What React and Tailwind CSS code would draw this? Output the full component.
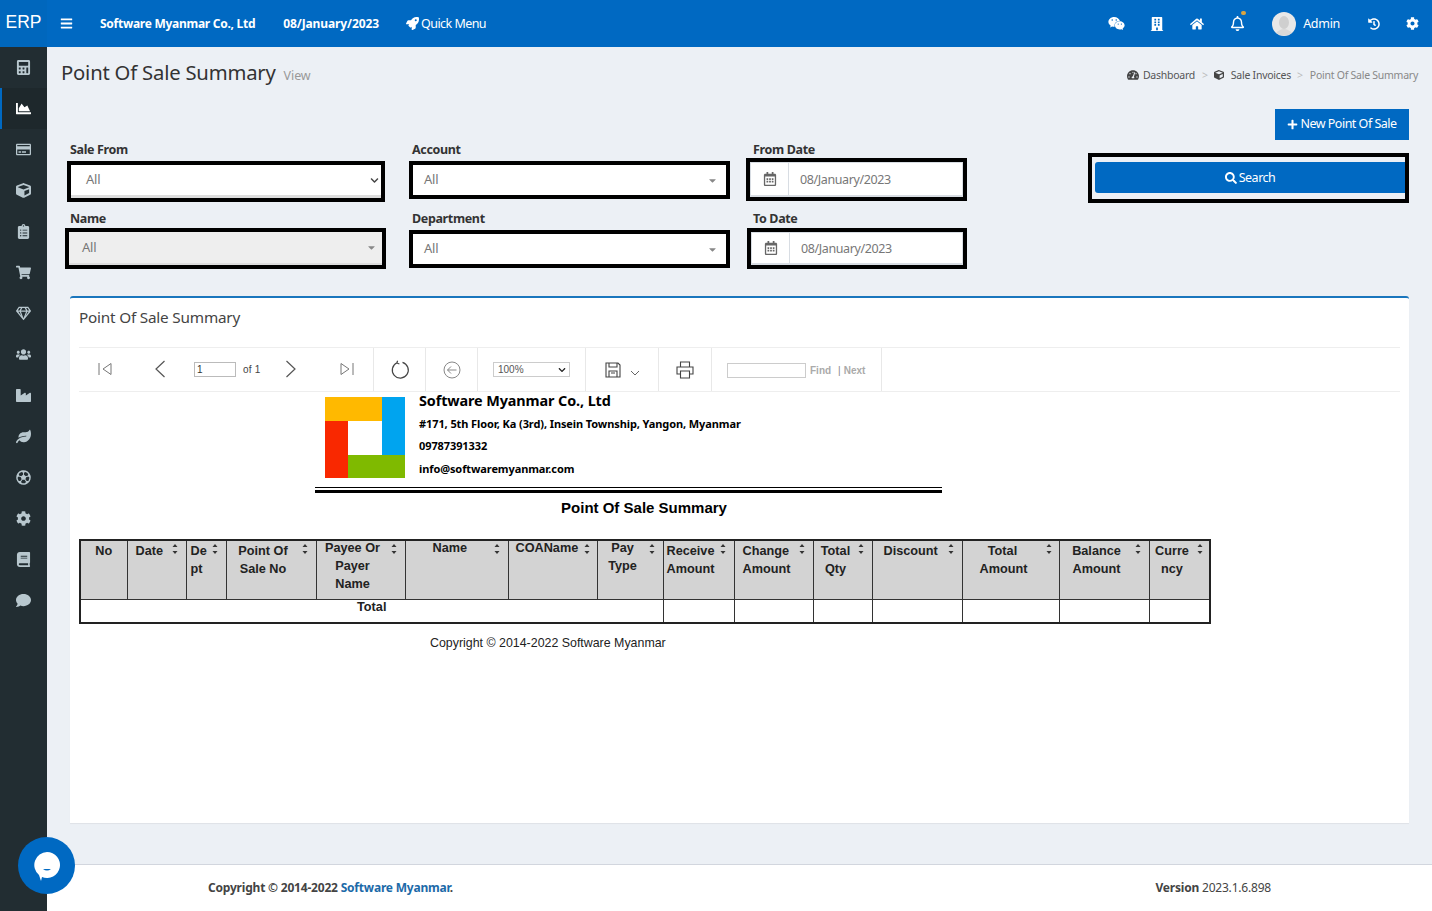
import React from 'react';
import {
  FaCalculator, FaChartArea, FaRegCreditCard, FaCube, FaClipboardList, FaShoppingCart, FaRegGem, FaUsers,
  FaIndustry, FaLeaf, FaRegFutbol, FaCog, FaBook, FaComment, FaBars, FaRocket, FaWeixin, FaBuilding, FaHome,
  FaRegBell, FaHistory, FaTachometerAlt, FaPlus, FaSearch, FaRegCalendarAlt, FaChevronDown, FaCaretDown,
} from 'react-icons/fa';

const side = [FaCalculator, FaChartArea, FaRegCreditCard, FaCube, FaClipboardList, FaShoppingCart, FaRegGem, FaUsers, FaIndustry, FaLeaf, FaRegFutbol, FaCog, FaBook, FaComment];

const columns = [
  { w: 'w-[47px]', lines: ['No'], cls: 'pt-[1px] text-center', sort: false },
  { w: 'w-[59px]', lines: ['Date'], cls: 'pt-[1px] pl-[8px]', sort: 'left-[44px] top-[2px]' },
  { w: 'w-[40px]', lines: ['De', 'pt'], cls: 'pt-[1px] pl-[4px]', sort: 'left-[25px] top-[2px]' },
  { w: 'w-[90px]', lines: ['Point Of', 'Sale No'], cls: 'pt-[1px] pl-[5px] text-center w-[68px]', sort: 'left-[75px] top-[2px]' },
  { w: 'w-[89px]', lines: ['Payee Or', 'Payer', 'Name'], cls: '-mt-[2px] text-center pl-[8px] w-[64px]', sort: 'left-[74px] top-[2px]' },
  { w: 'w-[103px]', lines: ['Name'], cls: '-mt-[2px] pl-[27px]', sort: 'left-[88px] top-[2px]' },
  { w: 'w-[89px]', lines: ['COAName'], cls: '-mt-[2px] pl-[7px]', sort: 'left-[75px] top-[2px]' },
  { w: 'w-[66px]', lines: ['Pay', 'Type'], cls: '-mt-[2px] pl-[5px] text-center w-[45px]', sort: 'left-[51px] top-[2px]' },
  { w: 'w-[71px]', lines: ['Receive', 'Amount'], cls: 'pt-[1px] pl-[3px]', sort: 'left-[56px] top-[2px]' },
  { w: 'w-[79px]', lines: ['Change', 'Amount'], cls: 'pt-[1px] pl-[8px]', sort: 'left-[64px] top-[2px]' },
  { w: 'w-[59px]', lines: ['Total', 'Qty'], cls: 'pt-[1px] pl-[6px] text-center w-[38px]', sort: 'left-[44px] top-[2px]' },
  { w: 'w-[90px]', lines: ['Discount'], cls: 'pt-[1px] pl-[11px]', sort: 'left-[75px] top-[2px]' },
  { w: 'w-[97px]', lines: ['Total', 'Amount'], cls: 'pt-[1px] pl-[17px] text-center w-[63px]', sort: 'left-[83px] top-[2px]' },
  { w: 'w-[90px]', lines: ['Balance', 'Amount'], cls: 'pt-[1px] pl-[11px] text-center w-[63px]', sort: 'left-[75px] top-[2px]' },
  { w: 'w-[61px]', lines: ['Curre', 'ncy'], cls: 'pt-[1px] pl-[5px] text-center w-[40px]', sort: 'left-[47px] top-[2px]' },
];

function Sort({ pos }) {
  return (
    <svg className={`absolute ${pos}`} width="6" height="12" viewBox="0 0 6 12">
      <path d="M3 1 L5.5 4 H0.5 Z M3 11 L5.5 8 H0.5 Z" fill="#333" />
    </svg>
  );
}

function Label({ children, cls = '' }) {
  return <div className={`h-[16px] pt-[1px] text-[12.5px] leading-[16px] font-bold text-[#333] tracking-[-0.35px] ${cls}`}>{children}</div>;
}

function SelectField({ frame, inner, icon }) {
  return (
    <div className={`border-[4px] border-black ${frame}`}>
      <div className={`h-full flex items-center justify-between ${inner}`}>
        <span className="text-[13px] text-[#777] tracking-[-0.2px]">All</span>
        {icon}
      </div>
    </div>
  );
}

function DateField({ frame }) {
  return (
    <div className={`border-[4px] border-black ${frame}`}>
      <div className="h-full flex bg-white border border-[#d8dde3] border-b-[2px]">
        <div className="w-[38px] flex items-center justify-center border-r border-[#d8dde3]">
          <FaRegCalendarAlt className="text-[14px] text-[#666]" />
        </div>
        <div className="flex items-center pl-[11px] pt-[2px] text-[12.5px] text-[#777] tracking-[-0.4px]">08/January/2023</div>
      </div>
    </div>
  );
}

const Caret = () => <FaCaretDown className="text-[11px] text-[#888]" />;

function Toolbar() {
  return (
    <div className="h-[45px] mt-[19px] border-y-[1.5px] border-[#eeeeee] flex items-stretch text-[#666]">
      <div className="w-[295px] border-r border-[#e8e8e8] flex items-center pb-[1px]">
        <svg className="ml-[18px]" width="16" height="14" viewBox="0 0 16 14" fill="none" stroke="#777" strokeWidth="1"><path d="M2 1 V13 M14 1.5 V12.5 L6 7 Z" /></svg>
        <svg className="ml-[41px]" width="12" height="18" viewBox="0 0 12 18" fill="none" stroke="#555" strokeWidth="1.2"><path d="M10.5 1 L2 9 L10.5 17" /></svg>
        <div className="ml-[28px] w-[42px] h-[15px] border border-[#bbb] bg-white text-[10px] leading-[13px] pl-[2px] font-['Liberation_Sans',sans-serif] text-[#333]">1</div>
        <span className="ml-[7px] text-[10px] font-['Liberation_Sans',sans-serif] text-[#444] tracking-[0.2px]">of 1</span>
        <svg className="ml-[25px]" width="12" height="18" viewBox="0 0 12 18" fill="none" stroke="#555" strokeWidth="1.2"><path d="M1.5 1 L10 9 L1.5 17" /></svg>
        <svg className="ml-[42px]" width="16" height="14" viewBox="0 0 16 14" fill="none" stroke="#777" strokeWidth="1"><path d="M14 1 V13 M2 1.5 V12.5 L10 7 Z" /></svg>
      </div>
      <div className="w-[52px] border-r border-[#e8e8e8] flex items-center justify-center">
        <svg width="20" height="20" viewBox="0 0 20 20" fill="none" stroke="#444" strokeWidth="1.2"><path d="M7 2.8 A8 8 0 1 0 12.5 2.4 M7.6 0.8 L6.8 3 L9.4 4" /></svg>
      </div>
      <div className="w-[52px] border-r border-[#e8e8e8] flex items-center justify-center">
        <svg width="18" height="18" viewBox="0 0 18 18" fill="none" stroke="#888" strokeWidth="1"><circle cx="9" cy="9" r="8" /><path d="M13.5 9 H4.5 M8 5.5 L4.5 9 L8 12.5" /></svg>
      </div>
      <div className="w-[108px] border-r border-[#e8e8e8] flex items-center pl-[15px]">
        <div className="w-[77px] h-[15px] border border-[#ccc] bg-white flex items-center justify-between pl-[4px] pr-[3px] text-[10px] font-['Liberation_Sans',sans-serif] text-[#555]">
          100%<FaChevronDown className="text-[8px] text-[#222]" />
        </div>
      </div>
      <div className="w-[73px] border-r border-[#e8e8e8] flex items-center pl-[19px]">
        <svg width="16" height="16" viewBox="0 0 16 16" fill="none" stroke="#444" strokeWidth="1.1"><path d="M1 1 H13 L15 3 V15 H1 Z M4 1 V5 H12 V1 M4 15 V9 H12 V15 M6 11 H10" /></svg>
        <svg className="ml-[9px] mt-[6px]" width="10" height="6" viewBox="0 0 10 6" fill="none" stroke="#666" strokeWidth="1"><path d="M1 1 L5 5 L9 1" /></svg>
      </div>
      <div className="w-[53px] border-r border-[#e8e8e8] flex items-center justify-center">
        <svg width="18" height="18" viewBox="0 0 18 18" fill="none" stroke="#444" strokeWidth="1.1"><path d="M4.5 6 V1 H13.5 V6 M4.5 13 H1 V6 H17 V13 H13.5 M4.5 10 H13.5 V17 H4.5 Z" /></svg>
      </div>
      <div className="w-[170px] border-r border-[#e8e8e8] flex items-center pl-[15px] pt-[2px] font-['Liberation_Sans',sans-serif] text-[10px] font-bold text-[#aaa]">
        <div className="w-[79px] h-[15px] border border-[#ccc] bg-white" />
        <span className="ml-[4px]">Find</span>
        <span className="ml-[7px] font-normal text-[#888]">|</span>
        <span className="ml-[3px]">Next</span>
      </div>
    </div>
  );
}

function Logo() {
  return (
    <svg width="80" height="81" viewBox="0 0 80 81" className="shrink-0">
      <rect x="0" y="0" width="57" height="24" fill="#ffb900" />
      <rect x="57" y="0" width="23" height="58" fill="#00a4ef" />
      <rect x="23" y="58" width="57" height="23" fill="#7fba00" />
      <rect x="0" y="24" width="23" height="57" fill="#f92800" />
    </svg>
  );
}

function ReportTable() {
  return (
    <table className="table-fixed border-collapse w-[1131px] mt-[22px] border-2 border-[#222] font-['Liberation_Sans',sans-serif] text-[12.7px] text-[#222]">
      <colgroup>
        {columns.map((c, i) => <col key={i} className={c.w} />)}
      </colgroup>
      <thead>
        <tr className="h-[59px] bg-[#d3d3d3]">
          {columns.map((c, i) => (
            <th key={i} className="relative align-top p-0 border border-[#333] font-bold text-left">
              <div className={`leading-[18px] ${c.cls}`}>
                {c.lines.map((l) => <div key={l}>{l}</div>)}
              </div>
              {c.sort && <Sort pos={c.sort} />}
            </th>
          ))}
        </tr>
      </thead>
      <tbody>
        <tr className="h-[24px]">
          <td colSpan={8} className="align-top p-0 text-center font-bold border border-[#333] leading-[15px]">Total</td>
          {[0, 1, 2, 3, 4, 5, 6].map((i) => <td key={i} className="border border-[#333] p-0" />)}
        </tr>
      </tbody>
    </table>
  );
}

export default function App() {
  return (
    <div className="relative w-[1432px] h-[911px] overflow-hidden flex flex-col bg-[#ecf0f5] font-['Noto_Sans',sans-serif]">
      <header className="h-[47px] shrink-0 bg-[#0069c2] flex items-center text-white">
        <div className="w-[47px] text-center text-[17.5px] font-['Liberation_Sans',sans-serif] bg-[#0067bd] h-full leading-[45px]">ERP</div>
        <FaBars className="ml-[13px] text-[13px]" />
        <span className="ml-[27px] text-[12px] font-bold tracking-[-0.27px]">Software Myanmar Co., Ltd</span>
        <span className="ml-[28px] text-[12px] font-bold tracking-[-0.1px]">08/January/2023</span>
        <FaRocket className="ml-[27px] text-[13px]" />
        <span className="ml-[2px] pt-[1px] text-[12.5px] tracking-[-0.55px]">Quick Menu</span>
        <div className="ml-auto flex items-center">
          <FaWeixin className="text-[17px]" />
          <FaBuilding className="ml-[25px] text-[14px]" />
          <FaHome className="ml-[26px] text-[14px]" />
          <div className="relative ml-[26px]">
            <FaRegBell className="text-[15px]" />
            <span className="absolute -top-[5px] left-[11px] w-[5px] h-[4px] rounded-full bg-[#d9a441]" />
          </div>
          <svg className="ml-[27px]" width="24" height="24" viewBox="0 0 24 24">
            <circle cx="12" cy="12" r="12" fill="#e8e8e8" />
            <ellipse cx="12" cy="10.5" rx="5" ry="6.5" fill="#cfcfcf" />
            <path d="M4 21 Q12 13 20 21 Q12 26 4 21 Z" fill="#d8d8d8" />
          </svg>
          <span className="ml-[7px] pt-[1px] text-[12.5px] tracking-[-0.3px]">Admin</span>
          <FaHistory className="ml-[28px] text-[12px]" />
          <FaCog className="ml-[26px] mr-[13px] text-[13px]" />
        </div>
      </header>

      <div className="flex flex-1 min-h-0">
        <aside className="w-[47px] shrink-0 bg-[#222d32] flex flex-col">
          {side.map((Icon, i) => (
            <div key={i} className={`h-[41px] flex items-center justify-center text-[15px] pb-[1px] ${i === 1 ? 'bg-[#1e282c] border-l-[2px] border-[#0069c2] text-white pr-[3px]' : 'text-[#b8c7ce] pr-[1px]'}`}>
              <Icon />
            </div>
          ))}
        </aside>

        <div className="flex-1 min-w-0 flex flex-col">
          <main className="flex-1 min-h-0 pl-[23px] pr-[23px]">
            <div className="h-[62px] flex items-start">
              <h1 className="-ml-[9px] mt-[10px] text-[20.25px] leading-[30px] text-[#333] tracking-[-0.2px]">Point Of Sale Summary</h1>
              <span className="ml-[8px] mt-[20px] text-[12.5px] leading-[18px] text-[#999] tracking-[-0.1px]">View</span>
              <div className="ml-auto mr-[-9px] mt-[20px] flex items-center text-[10.5px] leading-[16px] text-[#555] tracking-[-0.25px]">
                <FaTachometerAlt className="text-[12px] text-[#444] mr-[4px]" />
                <span>Dashboard</span>
                <span className="ml-[7px] mr-[6px] text-[#bbb]">&gt;</span>
                <FaCube className="text-[10px] text-[#444] mr-[7px]" />
                <span>Sale Invoices</span>
                <span className="ml-[6px] mr-[7px] text-[#bbb]">&gt;</span>
                <span className="text-[#888]">Point Of Sale Summary</span>
              </div>
            </div>

            <div className="h-[187px] flex">
              <div className="w-[341px] pt-[32px]">
                <Label>Sale From</Label>
                <SelectField
                  frame="mt-[4px] -ml-[3px] w-[318px] h-[41px]"
                  inner="bg-white border-b-[3px] border-[#dddddd] pl-[15px] pr-[2px]"
                  icon={<FaChevronDown className="text-[9px] text-[#444]" />}
                />
                <Label cls="mt-[8px]">Name</Label>
                <SelectField
                  frame="mt-[2px] -ml-[5px] w-[321px] h-[41px]"
                  inner="bg-[#eeeeee] border-b-[2px] border-[#dddddd] pl-[13px] pr-[5px]"
                  icon={<Caret />}
                />
              </div>
              <div className="w-[342px] pt-[32px]">
                <Label cls="pl-[1px]">Account</Label>
                <SelectField
                  frame="mt-[4px] -ml-[2px] w-[321px] h-[38px]"
                  inner="bg-white pl-[11px] pr-[8px]"
                  icon={<Caret />}
                />
                <Label cls="mt-[11px] pl-[1px]">Department</Label>
                <SelectField
                  frame="mt-[4px] -ml-[2px] w-[321px] h-[38px]"
                  inner="bg-white pl-[11px] pr-[8px]"
                  icon={<Caret />}
                />
              </div>
              <div className="w-[335px] pt-[32px]">
                <Label>From Date</Label>
                <DateField frame="mt-[1px] -ml-[7px] w-[221px] h-[43px]" />
                <Label cls="mt-[9px]">To Date</Label>
                <DateField frame="mt-[2px] -ml-[6px] w-[220px] h-[41px]" />
              </div>
              <div className="w-[321px] flex flex-col items-end">
                <button className="w-[134px] h-[31px] bg-[#0069c2] text-white text-[12.5px] flex items-center justify-center tracking-[-0.5px]">
                  <FaPlus className="text-[11px] mr-[2px]" />New Point Of Sale
                </button>
                <div className="mt-[13px] w-[321px] h-[50px] border-[4px] border-black pl-[3px] pt-[5px]">
                  <button className="w-full h-[31px] pt-[1px] rounded-l-[3px] bg-[#0069c2] text-white text-[12.5px] flex items-center justify-center tracking-[-0.5px]">
                    <FaSearch className="text-[12px] mr-[2px]" />Search
                  </button>
                </div>
              </div>
            </div>

            <section className="h-[527px] bg-white border-t-2 border-[#1a76bd] rounded-t-[3px] shadow-[0_1px_1px_rgba(0,0,0,0.06)] px-[9px]">
              <div className="pt-[8px] text-[15.3px] leading-[22px] text-[#444] tracking-[-0.2px]">Point Of Sale Summary</div>
              <Toolbar />
              <div className="w-[627px] ml-[236px] mt-[5px]">
                <div className="flex pl-[10px]">
                  <Logo />
                  <div className="ml-[14px] -mt-[2px] font-bold text-black tracking-[-0.1px]">
                    <div className="text-[14.4px] leading-[11px]">Software Myanmar Co., Ltd</div>
                    <div className="mt-[12px] text-[11px] leading-[12px]">#171, 5th Floor, Ka (3rd), Insein Township, Yangon, Myanmar</div>
                    <div className="mt-[10px] text-[11px] leading-[12px]">09787391332</div>
                    <div className="mt-[11px] text-[11px] leading-[12px]">info@softwaremyanmar.com</div>
                  </div>
                </div>
                <div className="mt-[9px] h-[6px] border-t border-b-[3px] border-black" />
              </div>
              <div className="w-[1131px] mt-[6px] pl-[352px] font-['Liberation_Sans',sans-serif] text-[15px] leading-[18px] font-bold text-black">
                <span className="inline-block w-[426px] text-center">Point Of Sale Summary</span>
              </div>
              <ReportTable />
              <div className="mt-[11px] ml-[351px] font-['Liberation_Sans',sans-serif] text-[12.4px] leading-[16px] text-[#222]">Copyright © 2014-2022 Software Myanmar</div>
            </section>
          </main>

          <footer className="h-[47px] shrink-0 bg-white border-t border-[#d2d6de] flex items-center pl-[161px] pr-[161px] text-[12px] text-[#444] tracking-[-0.2px]">
            <span className="font-bold">Copyright © 2014-2022 <span className="text-[#1c6aa8]">Software Myanmar</span>.</span>
            <span className="ml-auto"><span className="font-bold">Version</span> 2023.1.6.898</span>
          </footer>
        </div>
      </div>

      <div className="absolute left-[18px] top-[837px] w-[57px] h-[57px] rounded-full bg-[#0069c2] flex items-center justify-center">
        <svg width="30" height="32" viewBox="0 0 30 32">
          <path d="M15 2 A13 13 0 1 1 10 27 L9 31 L7 25 A13 13 0 0 1 15 2 Z" fill="#fff" />
          <path d="M11 19 Q15 22 19 19 Z" fill="#0069c2" />
        </svg>
      </div>
    </div>
  );
}
